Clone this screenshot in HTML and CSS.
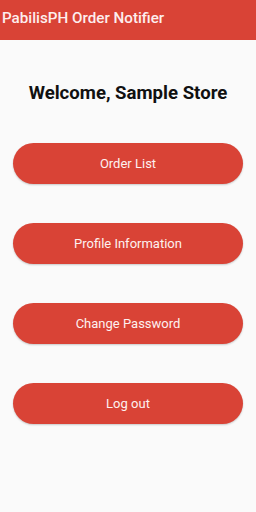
FILE: index.html
```html
<!DOCTYPE html>
<html lang="en">
<head>
    <meta charset="UTF-8">
    <meta name="viewport" content="width=device-width, initial-scale=1.0">
    <title>PabilisPH Order Notifier</title>
    <link rel="stylesheet" href="styles.css">
</head>
<body>
    <header class="app-bar">PabilisPH Order Notifier</header>

    <main class="content">
        <h1>Welcome, Sample Store</h1>

        <div class="menu">
            <button type="button">Order List</button>
            <button type="button">Profile Information</button>
            <button type="button">Change Password</button>
            <button type="button">Log out</button>
        </div>
    </main>
</body>
</html>
```

FILE: styles.css
```css
* {
    margin: 0;
    padding: 0;
    box-sizing: border-box;
}

body {
    background-color: #fafafa;
    color: #111;
    font-family: Roboto, 'Noto Sans', sans-serif;
    width: 256px;
    height: 512px;
}

.app-bar {
    height: 40px;
    background-color: #d94336;
    color: #fdeeee;
    font-size: 15.2px;
    font-weight: 500;
    padding: 0 2px 4px;
    display: flex;
    align-items: center;
}

.content {
    padding: 41px 13px 0;
}

h1 {
    font-size: 18.6px;
    font-weight: 700;
    text-align: center;
    margin-bottom: 38px;
    line-height: 24px;
}

.menu {
    display: flex;
    flex-direction: column;
    gap: 39px;
}

button {
    height: 41px;
    width: 100%;
    border: none;
    border-radius: 21px;
    background-color: #d94336;
    color: #fdf1f0;
    font-family: Roboto, 'Noto Sans', sans-serif;
    font-size: 13px;
    box-shadow: 0 1px 2px rgba(0, 0, 0, 0.2);
}
```
